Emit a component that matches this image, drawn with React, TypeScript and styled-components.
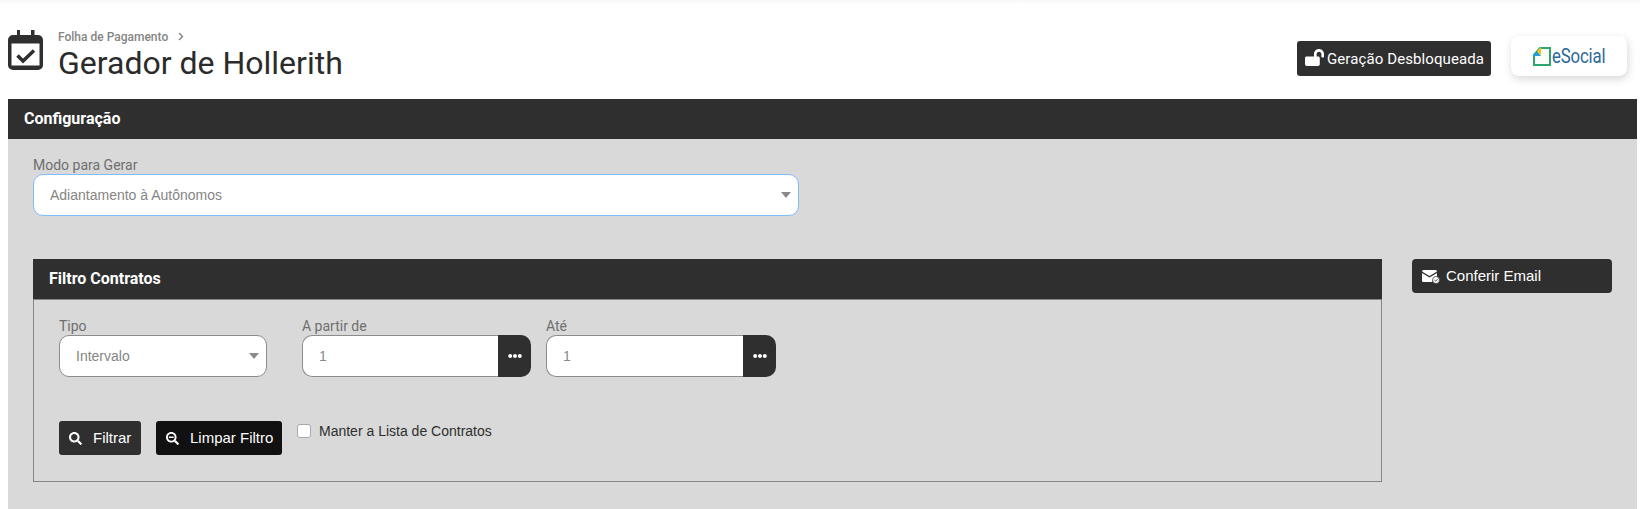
import styled, { createGlobalStyle } from 'styled-components';
import { FaEllipsisH, FaSearch, FaSearchMinus, FaLockOpen, FaChevronRight } from 'react-icons/fa';

const GlobalStyle = createGlobalStyle`
  html, body {
    margin: 0;
    padding: 0;
    background: #fff;
    height: 509px;
    overflow: hidden;
  }
  * { box-sizing: border-box; }
`;

const Page = styled.div`
  width: 1640px;
  height: 509px;
  padding: 0 3px 0 8px;
  background: linear-gradient(#f7f7f7, #fff 5px);
  font-family: Roboto, sans-serif;
  display: flex;
  flex-direction: column;
`;

const Header = styled.header`
  height: 99px;
  padding-top: 30px;
  display: flex;
  align-items: flex-start;
`;

const HeaderIcon = styled.svg`
  width: 35px;
  height: 40px;
  flex: none;
`;

const Titles = styled.div`
  margin-left: 15px;
  flex: 1;
`;

const Breadcrumb = styled.div`
  height: 13px;
  font-size: 12px;
  font-weight: 500;
  line-height: 14px;
  color: #858585;
  display: flex;
  align-items: center;
  gap: 9px;
  svg { width: 8px; height: 9px; }
`;

const Title = styled.h1`
  margin: 0;
  font-size: 32px;
  font-weight: 400;
  line-height: 40px;
  color: #2b2b2b;
`;

const HeaderActions = styled.div`
  display: flex;
  align-items: flex-start;
  margin-top: 6px;
  margin-right: 10px;
`;

const StatusBadge = styled.div`
  width: 194px;
  height: 35px;
  margin-top: 5px;
  background: #2f2f2f;
  color: #fff;
  border-radius: 3px;
  font-size: 15px;
  font-weight: 400;
  letter-spacing: 0.1px;
  display: flex;
  align-items: center;
  gap: 3px;
  padding-left: 8px;
  svg { width: 19px; height: 17px; margin-top: -3px; }
`;

const LogoCard = styled.div`
  width: 116px;
  height: 40px;
  margin-left: 20px;
  background: #fff;
  border-radius: 8px;
  box-shadow: 1px 3px 8px rgba(0, 0, 0, 0.16);
  display: flex;
  align-items: center;
  padding-left: 22px;
  svg { flex: none; }
`;

const LogoText = styled.span`
  font-size: 21px;
  color: #2d6a97;
  display: inline-block;
  transform: scaleX(0.8);
  transform-origin: left center;
  margin-left: 1px;
  letter-spacing: -0.2px;
`;

const BarTitle = styled.div`
  height: 40px;
  background: #2f2f2f;
  color: #fff;
  font-size: 16px;
  font-weight: 700;
  display: flex;
  align-items: center;
  padding: 0 0 2px 16px;
  flex: none;
`;

const Body = styled.main`
  flex: 1;
  background: #d9d9d9;
  padding: 18px 25px 0;
`;

const FieldLabel = styled.label`
  display: block;
  height: 17px;
  font-family: Roboto, sans-serif;
  font-size: 14px;
  line-height: 17px;
  color: #6f6f6f;
`;

const SelectBox = styled.div<{ $focused?: boolean }>`
  height: 42px;
  background: #fff;
  border: 1px solid ${(p) => (p.$focused ? '#80bdff' : '#8c8c8c')};
  border-radius: 10px;
  padding: 0 7px 0 16px;
  display: flex;
  align-items: center;
  justify-content: space-between;
  font-family: 'Liberation Sans', Arial, sans-serif;
  font-size: 14px;
  color: #858585;
`;

const Caret = styled.span`
  width: 0;
  height: 0;
  border-left: 5.5px solid transparent;
  border-right: 5.5px solid transparent;
  border-top: 6px solid #8a8a8a;
`;

const ModeField = styled.div`
  width: 766px;
`;

const FilterRow = styled.div`
  margin-top: 43px;
  display: flex;
  align-items: flex-start;
`;

const FilterPanel = styled.section`
  width: 1349px;
  flex: none;
`;

const FilterBody = styled.div`
  height: 183px;
  border: 1px solid #868686;
  padding: 18px 25px 0;
`;

const Fields = styled.div`
  display: flex;
  align-items: flex-start;
`;

const TypeField = styled.div`
  width: 208px;
  margin-right: 35px;
`;

const RangeField = styled.div<{ $width: number; $gap?: number }>`
  width: ${(p) => p.$width}px;
  margin-right: ${(p) => p.$gap ?? 0}px;
`;

const InputGroup = styled.div`
  height: 42px;
  display: flex;
`;

const NumberBox = styled.div`
  flex: 1;
  background: #fff;
  border: 1px solid #8c8c8c;
  border-right: 0;
  border-radius: 10px 0 0 10px;
  padding-left: 16px;
  display: flex;
  align-items: center;
  font-family: 'Liberation Sans', Arial, sans-serif;
  font-size: 14px;
  color: #8a8a8a;
`;

const DotsButton = styled.button`
  width: 33px;
  border: 0;
  padding: 0;
  background: #2f2f2f;
  color: #fff;
  border-radius: 0 10px 10px 0;
  display: flex;
  align-items: center;
  justify-content: center;
  svg { width: 14px; height: 14px; }
`;

const Actions = styled.div`
  margin-top: 44px;
  display: flex;
  align-items: flex-start;
`;

const ActionButton = styled.button<{ $width: number; $bg: string }>`
  width: ${(p) => p.$width}px;
  height: 34px;
  border: 0;
  border-radius: 3px;
  background: ${(p) => p.$bg};
  color: #fff;
  font-family: 'Liberation Sans', Arial, sans-serif;
  font-size: 15px;
  display: flex;
  align-items: center;
  gap: 11px;
  padding: 0 0 1px 10px;
  margin-right: 15px;
  svg { width: 13px; height: 13px; margin-top: 1px; }
`;

const CheckLabel = styled.label`
  display: flex;
  align-items: center;
  gap: 8px;
  margin-top: 2px;
  font-family: 'Liberation Sans', Arial, sans-serif;
  font-size: 14px;
  color: #2f2f2f;
`;

const CheckBox = styled.span`
  width: 14px;
  height: 14px;
  background: #fff;
  border: 1px solid #a8a8a8;
  border-radius: 3px;
`;

const EmailButton = styled.button`
  width: 200px;
  height: 34px;
  margin-left: 30px;
  border: 0;
  border-radius: 4px;
  background: #2f2f2f;
  color: #fff;
  font-family: 'Liberation Sans', Arial, sans-serif;
  font-size: 15px;
  display: flex;
  align-items: center;
  gap: 6px;
  padding: 0 0 2px 10px;
  svg { width: 18px; height: 14px; margin-top: 4px; }
`;

export default function App() {
  return (
    <>
      <GlobalStyle />
      <Page>
        <Header>
          <HeaderIcon viewBox="0 0 35 40">
            <path fill="#2f2f2f" d="M9 0h3v5h11V0h3.500v5H30a5 5 0 0 1 5 5v25a5 5 0 0 1-5 5H5a5 5 0 0 1-5-5V10a5 5 0 0 1 5-5h4z" />
            <rect x="3.500" y="13.500" width="28" height="22" fill="#fff" />
            <path d="M9.500 25.500l5.500 5.500 11-10.500" fill="none" stroke="#2f2f2f" strokeWidth="3.500" />
          </HeaderIcon>
          <Titles>
            <Breadcrumb>
              Folha de Pagamento
              <FaChevronRight />
            </Breadcrumb>
            <Title>Gerador de Hollerith</Title>
          </Titles>
          <HeaderActions>
            <StatusBadge>
              <FaLockOpen />
              Geração Desbloqueada
            </StatusBadge>
            <LogoCard>
              <svg width="18" height="19" viewBox="0 0 18 19">
                <path d="M1 8l6-7h10v17H1z" fill="#fbfdf8" stroke="#2fa66b" strokeWidth="2" />
                <path d="M0 9l4-5 4 5z" fill="#1f9fe0" />
                <path d="M4 4l4-4v9z" fill="#f5c518" />
              </svg>
              <LogoText>eSocial</LogoText>
            </LogoCard>
          </HeaderActions>
        </Header>

        <BarTitle>Configuração</BarTitle>
        <Body>
          <ModeField>
            <FieldLabel>Modo para Gerar</FieldLabel>
            <SelectBox $focused>
              Adiantamento à Autônomos
              <Caret />
            </SelectBox>
          </ModeField>

          <FilterRow>
            <FilterPanel>
              <BarTitle>Filtro Contratos</BarTitle>
              <FilterBody>
                <Fields>
                  <TypeField>
                    <FieldLabel>Tipo</FieldLabel>
                    <SelectBox>
                      Intervalo
                      <Caret />
                    </SelectBox>
                  </TypeField>
                  <RangeField $width={229} $gap={15}>
                    <FieldLabel>A partir de</FieldLabel>
                    <InputGroup>
                      <NumberBox>1</NumberBox>
                      <DotsButton><FaEllipsisH /></DotsButton>
                    </InputGroup>
                  </RangeField>
                  <RangeField $width={230}>
                    <FieldLabel>Até</FieldLabel>
                    <InputGroup>
                      <NumberBox>1</NumberBox>
                      <DotsButton><FaEllipsisH /></DotsButton>
                    </InputGroup>
                  </RangeField>
                </Fields>
                <Actions>
                  <ActionButton $width={82} $bg="#2f2f2f">
                    <FaSearch />
                    Filtrar
                  </ActionButton>
                  <ActionButton $width={126} $bg="#111111">
                    <FaSearchMinus />
                    Limpar Filtro
                  </ActionButton>
                  <CheckLabel>
                    <CheckBox />
                    Manter a Lista de Contratos
                  </CheckLabel>
                </Actions>
              </FilterBody>
            </FilterPanel>
            <EmailButton>
              <svg viewBox="0 0 18 14">
                <path fill="#fff" d="M0 1.500A1.500 1.500 0 0 1 1.500 0h12A1.500 1.500 0 0 1 15 1.500L7.500 6 0 1.500z" />
                <path fill="#fff" d="M0 3l7.500 4.500L15 3v5a5 5 0 0 0-5 4H1.500A1.500 1.500 0 0 1 0 10.500z" />
                <circle cx="14" cy="10" r="3.500" fill="#fff" stroke="#2f2f2f" strokeWidth="0.700" />
                <path d="M12.400 10l1.200 1.200 2-2" fill="none" stroke="#2f2f2f" strokeWidth="0.900" />
              </svg>
              Conferir Email
            </EmailButton>
          </FilterRow>
        </Body>
      </Page>
    </>
  );
}
